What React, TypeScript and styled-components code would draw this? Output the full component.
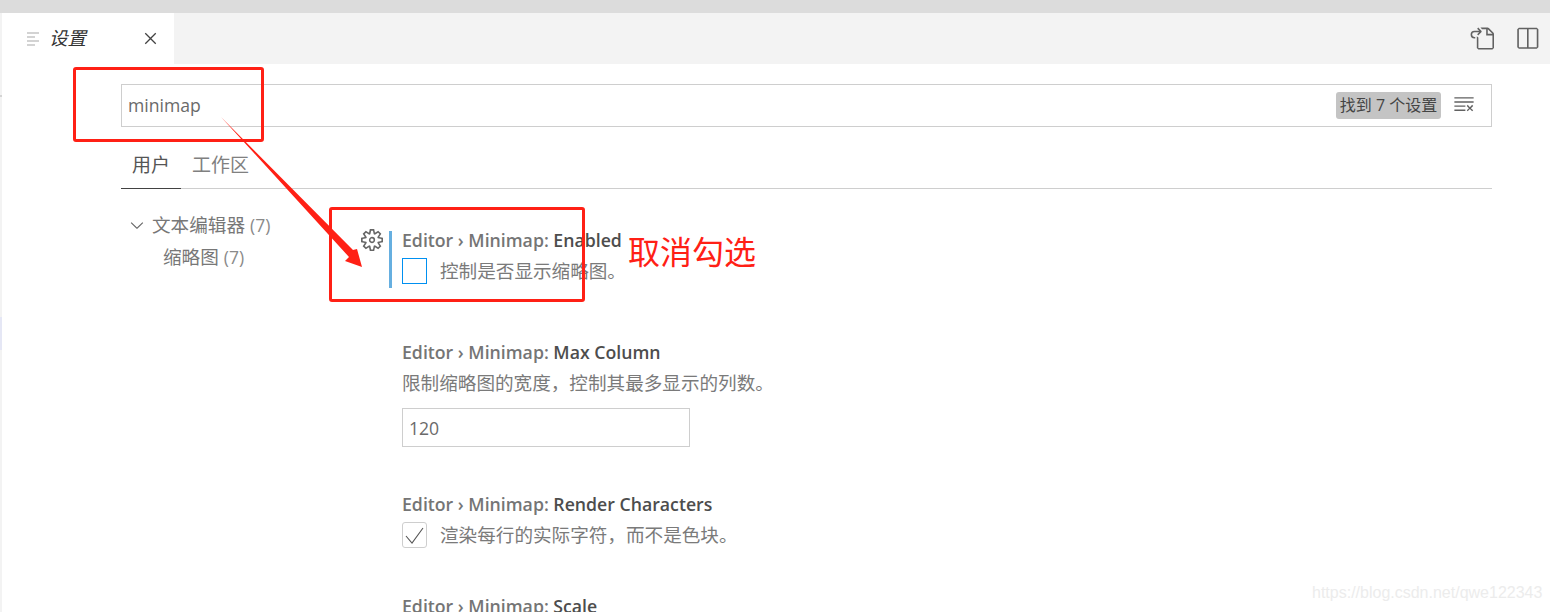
import React from "react";
import styled, { createGlobalStyle } from "styled-components";
import {
    VscChevronDown,
    VscClearAll,
    VscClose,
    VscGoToFile,
    VscSettingsGear,
    VscSplitHorizontal,
} from "react-icons/vsc";

const GlobalStyle = createGlobalStyle`
    html, body {
        margin: 0;
        padding: 0;
        background: #fff;
    }
    body {
        font-family: "Open Sans", "Noto Sans CJK SC", sans-serif;
    }
`;

const Page = styled.div`
    position: relative;
    width: 1550px;
    height: 612px;
    overflow: hidden;
    display: flex;
    flex-direction: column;
    background: #fff;
`;

const MenuStrip = styled.div`
    height: 13px;
    flex: none;
    overflow: hidden;
    background: #dcdcdc;
`;

const MenuRow = styled.div`
    display: flex;
    gap: 20px;
    margin-top: -23px;
    padding-left: 6px;
    font-size: 18px;
    line-height: 26px;
    color: #333;
`;

const Workbench = styled.div`
    flex: 1;
    display: flex;
    min-height: 0;
`;

const LeftEdge = styled.div`
    width: 2px;
    flex: none;
    background: #f3f3f3;
    display: flex;
    flex-direction: column;
`;

const EdgeMark = styled.div<{ $top: number; $height: number; $color: string }>`
    margin-top: ${(p) => p.$top}px;
    height: ${(p) => p.$height}px;
    background: ${(p) => p.$color};
`;

const Editor = styled.div`
    flex: 1;
    min-width: 0;
    display: flex;
    flex-direction: column;
`;

const TabBar = styled.div`
    height: 51px;
    flex: none;
    display: flex;
    align-items: stretch;
    background: #f3f3f3;
`;

const Tab = styled.div`
    width: 172px;
    display: flex;
    align-items: center;
    background: #fff;
    padding: 0 13px 0 25px;
    box-sizing: border-box;
`;

const TabTitle = styled.span`
    flex: 1;
    margin-left: 10px;
    margin-top: -3px;
    font-size: 18.5px;
    font-style: italic;
    color: #333;
`;

const TabActions = styled.div`
    margin-left: auto;
    display: flex;
    align-items: center;
    gap: 20px;
    padding-right: 10px;
    color: #616161;
`;

const SettingsBody = styled.div`
    flex: 1;
    min-height: 0;
    padding: 20px 58px 0 119px;
    display: flex;
    flex-direction: column;
`;

const SearchBox = styled.div`
    height: 43px;
    flex: none;
    box-sizing: border-box;
    border: 1px solid #cecece;
    display: flex;
    align-items: center;
    padding: 0 16px 0 6px;
    color: #616161;
`;

const SearchText = styled.span`
    flex: 1;
    margin-top: -1px;
    font-size: 17.6px;
    color: #6a6a6a;
`;

const CountBadge = styled.span`
    height: 27px;
    width: 105px;
    border-radius: 3px;
    background: #c4c4c4;
    color: #444;
    font-size: 16px;
    line-height: 27px;
    text-align: center;
    white-space: nowrap;
    margin-right: 12px;
`;

const ClearIcon = styled(VscClearAll)`
    margin-top: -4px;
`;

const ScopeTabs = styled.div`
    height: 62px;
    flex: none;
    box-sizing: border-box;
    border-bottom: 1px solid #cecece;
    display: flex;
    align-items: flex-end;
`;

const ScopeTab = styled.div<{ $active?: boolean }>`
    height: 48px;
    box-sizing: border-box;
    margin-bottom: -1px;
    padding: 10px 11px 0;
    font-size: 19px;
    line-height: 28px;
    color: ${(p) => (p.$active ? "#555" : "#808080")};
    border-bottom: 1px solid ${(p) => (p.$active ? "#424242" : "transparent")};
`;

const Columns = styled.div`
    flex: 1;
    min-height: 0;
    display: flex;
`;

const Toc = styled.div`
    width: 240px;
    flex: none;
    padding-top: 20px;
    font-size: 18.6px;
    line-height: 32px;
    color: #777;
`;

const TocRow = styled.div<{ $indent: number }>`
    display: flex;
    align-items: center;
    padding-left: ${(p) => p.$indent}px;
    white-space: nowrap;
`;

const TocChevron = styled.span`
    width: 25px;
    display: flex;
    color: #666;
`;

const Count = styled.span`
    font-size: 17.5px;
    margin-left: 5px;
    color: #8a8a8a;
`;

const SettingList = styled.div`
    flex: 1;
    display: flex;
    flex-direction: column;
    padding-top: 42px;
`;

const SettingRow = styled.div<{ $height: number }>`
    display: flex;
    height: ${(p) => p.$height}px;
    flex: none;
`;

const GearSlot = styled.div`
    width: 28px;
    flex: none;
    color: #666;
    display: flex;
    margin-top: -2px;
`;

const Marker = styled.div<{ $on?: boolean }>`
    width: 3px;
    height: 57px;
    flex: none;
    margin-right: 10px;
    background: ${(p) => (p.$on ? "#66afe0" : "transparent")};
`;

const SettingContent = styled.div`
    flex: 1;
    display: flex;
    flex-direction: column;
    align-items: flex-start;
`;

const SettingTitle = styled.div`
    font-size: 17.7px;
    line-height: 18px;
    height: 18px;
    color: #757575;
    font-weight: 600;
    white-space: nowrap;
`;

const SettingKey = styled.span`
    color: #4d4d4d;
`;

const SettingText = styled.div`
    font-size: 18.6px;
    line-height: 26px;
    color: #7a7a7a;
    margin-top: 9px;
    white-space: nowrap;
`;

const CheckRow = styled.div`
    display: flex;
    align-items: center;
    margin-top: 9px;
`;

const CheckBox = styled.div<{ $focus?: boolean }>`
    width: 25px;
    height: 26px;
    box-sizing: border-box;
    border: 1px solid ${(p) => (p.$focus ? "#0090f1" : "#cecece")};
    border-radius: ${(p) => (p.$focus ? 0 : 3)}px;
    display: flex;
    align-items: center;
    justify-content: center;
    margin-right: 13px;
`;

const CheckLabel = styled(SettingText)`
    margin-top: 0;
`;

const NumberInput = styled.div`
    width: 288px;
    height: 39px;
    box-sizing: border-box;
    margin-top: 12px;
    border: 1px solid #cecece;
    padding-left: 6px;
    font-size: 17.6px;
    line-height: 38px;
    color: #6a6a6a;
`;

const RedBox = styled.div<{ $x: number; $y: number; $w: number; $h: number }>`
    position: absolute;
    left: ${(p) => p.$x}px;
    top: ${(p) => p.$y}px;
    width: ${(p) => p.$w}px;
    height: ${(p) => p.$h}px;
    box-sizing: border-box;
    border: 3px solid #ff2015;
    border-radius: 3px;
`;

const Arrow = styled.svg`
    position: absolute;
    left: 0;
    top: 0;
    pointer-events: none;
`;

const Note = styled.div`
    position: absolute;
    left: 628px;
    top: 230px;
    font-size: 32px;
    line-height: 44px;
    color: #ff2015;
    white-space: nowrap;
`;

const Watermark = styled.div`
    position: absolute;
    left: 1312px;
    top: 584px;
    font-family: "Liberation Sans", sans-serif;
    font-size: 16px;
    line-height: 18px;
    color: #ececec;
    white-space: nowrap;
`;

const menus = ["文件(F)", "编辑(E)", "选择(S)", "查看(V)", "转到(G)", "运行(R)", "终端(T)", "帮助(H)"];

function ListIcon() {
    return (
        <svg width="12" height="14" viewBox="0 0 12 14" fill="none" stroke="#c5c5c5" strokeWidth="1.4">
            <path d="M0 1h12M0 5h8M0 9h12M0 13h8" />
        </svg>
    );
}

function Title({ name }: { name: string }) {
    return (
        <SettingTitle>
            Editor › Minimap: <SettingKey>{name}</SettingKey>
        </SettingTitle>
    );
}

export default function App() {
    return (
        <Page>
            <GlobalStyle />
            <MenuStrip>
                <MenuRow>
                    {menus.map((m) => (
                        <span key={m}>{m}</span>
                    ))}
                </MenuRow>
            </MenuStrip>
            <Workbench>
                <LeftEdge>
                    <EdgeMark $top={82} $height={2} $color="#d4d4d4" />
                    <EdgeMark $top={220} $height={33} $color="#e5e7f5" />
                </LeftEdge>
                <Editor>
                    <TabBar>
                        <Tab>
                            <ListIcon />
                            <TabTitle>设置</TabTitle>
                            <VscClose size={21} color="#424242" />
                        </Tab>
                        <TabActions>
                            <VscGoToFile size={25} />
                            <VscSplitHorizontal size={26} />
                        </TabActions>
                    </TabBar>
                    <SettingsBody>
                        <SearchBox>
                            <SearchText>minimap</SearchText>
                            <CountBadge>找到 7 个设置</CountBadge>
                            <ClearIcon size={22} />
                        </SearchBox>
                        <ScopeTabs>
                            <ScopeTab $active>用户</ScopeTab>
                            <ScopeTab>工作区</ScopeTab>
                        </ScopeTabs>
                        <Columns>
                            <Toc>
                                <TocRow $indent={6}>
                                    <TocChevron>
                                        <VscChevronDown size={20} />
                                    </TocChevron>
                                    文本编辑器<Count>(7)</Count>
                                </TocRow>
                                <TocRow $indent={42}>
                                    缩略图<Count>(7)</Count>
                                </TocRow>
                            </Toc>
                            <SettingList>
                                <SettingRow $height={112}>
                                    <GearSlot>
                                        <VscSettingsGear size={22} />
                                    </GearSlot>
                                    <Marker $on />
                                    <SettingContent>
                                        <Title name="Enabled" />
                                        <CheckRow>
                                            <CheckBox $focus />
                                            <CheckLabel>控制是否显示缩略图。</CheckLabel>
                                        </CheckRow>
                                    </SettingContent>
                                </SettingRow>
                                <SettingRow $height={152}>
                                    <GearSlot />
                                    <Marker />
                                    <SettingContent>
                                        <Title name="Max Column" />
                                        <SettingText>限制缩略图的宽度，控制其最多显示的列数。</SettingText>
                                        <NumberInput>120</NumberInput>
                                    </SettingContent>
                                </SettingRow>
                                <SettingRow $height={102}>
                                    <GearSlot />
                                    <Marker />
                                    <SettingContent>
                                        <Title name="Render Characters" />
                                        <CheckRow>
                                            <CheckBox>
                                                <svg width="19" height="17" viewBox="0 0 19 17" fill="none" stroke="#555" strokeWidth="1.1">
                                                    <path d="M1 9L7 16 18 1" />
                                                </svg>
                                            </CheckBox>
                                            <CheckLabel>渲染每行的实际字符，而不是色块。</CheckLabel>
                                        </CheckRow>
                                    </SettingContent>
                                </SettingRow>
                                <SettingRow $height={40}>
                                    <GearSlot />
                                    <Marker />
                                    <SettingContent>
                                        <Title name="Scale" />
                                    </SettingContent>
                                </SettingRow>
                            </SettingList>
                        </Columns>
                    </SettingsBody>
                </Editor>
            </Workbench>
            <RedBox $x={73} $y={67} $w={191} $h={75} />
            <RedBox $x={329} $y={207} $w={256} $h={95} />
            <Arrow width="1550" height="612" viewBox="0 0 1550 612">
                <polygon points="221,117 353,250 357,249 362,267 345,261 349,257" fill="#ff2015" />
            </Arrow>
            <Note>取消勾选</Note>
            <Watermark>https://blog.csdn.net/qwe122343</Watermark>
        </Page>
    );
}
